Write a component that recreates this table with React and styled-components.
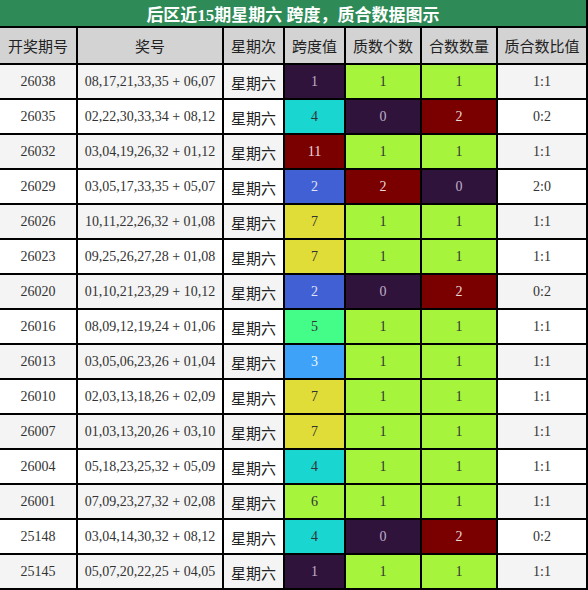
import React from "react";
import styled, { createGlobalStyle } from "styled-components";

const Global = createGlobalStyle`
  html, body { margin: 0; padding: 0; background: #fff; }
  body { font-family: "Liberation Serif", "Noto Sans CJK SC", serif; }
`;

const Grid = styled.div`
  display: grid;
  grid-template-columns: 76px 144px 59px 59px 74px 74px 88px;
  grid-template-rows: 26px 35px;
  grid-auto-rows: 33px;
  gap: 2px;
  padding: 0 2px 2px 0;
  background: #000;
  width: 588px;
  box-sizing: border-box;
`;

const Title = styled.div`
  grid-column: 1 / -1;
  background: #2e8b57;
  color: #fff;
  font-weight: bold;
  font-size: 17px;
  display: flex;
  align-items: center;
  justify-content: center;
`;

const Head = styled.div`
  background: #d3d3d3;
  color: #222;
  font-family: "Noto Sans CJK SC", sans-serif;
  font-size: 15px;
  display: flex;
  align-items: center;
  justify-content: center;
`;

const Cell = styled.div`
  background: ${(p) => p.$bg};
  color: ${(p) => p.$fg || "#333"};
  font-size: 14px;
  display: flex;
  align-items: center;
  justify-content: center;
  white-space: nowrap;
`;

const DayCell = styled(Cell)`
  font-family: "Noto Sans CJK SC", sans-serif;
  font-size: 15px;
  color: #222;
  padding-top: 1px;
`;

const C = {
  purple: ["#2f133b", "#c0b0cc"],
  lime: ["#a6f53c", "#333"],
  red: ["#7a0000", "#e8d8d8"],
  cyan: ["#1ad6d0", "#333"],
  blue: ["#4060d4", "#e0e4f8"],
  yellow: ["#e0dc38", "#333"],
  green: ["#44fc88", "#333"],
  lblue: ["#3da2f8", "#eef6ff"],
};

const rows = [
  ["26038", "08,17,21,33,35 + 06,07", "1", "purple", "1", "lime", "1", "lime", "1:1"],
  ["26035", "02,22,30,33,34 + 08,12", "4", "cyan", "0", "purple", "2", "red", "0:2"],
  ["26032", "03,04,19,26,32 + 01,12", "11", "red", "1", "lime", "1", "lime", "1:1"],
  ["26029", "03,05,17,33,35 + 05,07", "2", "blue", "2", "red", "0", "purple", "2:0"],
  ["26026", "10,11,22,26,32 + 01,08", "7", "yellow", "1", "lime", "1", "lime", "1:1"],
  ["26023", "09,25,26,27,28 + 01,08", "7", "yellow", "1", "lime", "1", "lime", "1:1"],
  ["26020", "01,10,21,23,29 + 10,12", "2", "blue", "0", "purple", "2", "red", "0:2"],
  ["26016", "08,09,12,19,24 + 01,06", "5", "green", "1", "lime", "1", "lime", "1:1"],
  ["26013", "03,05,06,23,26 + 01,04", "3", "lblue", "1", "lime", "1", "lime", "1:1"],
  ["26010", "02,03,13,18,26 + 02,09", "7", "yellow", "1", "lime", "1", "lime", "1:1"],
  ["26007", "01,03,13,20,26 + 03,10", "7", "yellow", "1", "lime", "1", "lime", "1:1"],
  ["26004", "05,18,23,25,32 + 05,09", "4", "cyan", "1", "lime", "1", "lime", "1:1"],
  ["26001", "07,09,23,27,32 + 02,08", "6", "lime", "1", "lime", "1", "lime", "1:1"],
  ["25148", "03,04,14,30,32 + 08,12", "4", "cyan", "0", "purple", "2", "red", "0:2"],
  ["25145", "05,07,20,22,25 + 04,05", "1", "purple", "1", "lime", "1", "lime", "1:1"],
];

const heads = ["开奖期号", "奖号", "星期次", "跨度值", "质数个数", "合数数量", "质合数比值"];

export default function App() {
  return (
    <>
      <Global />
      <Grid>
        <Title>后区近15期星期六 跨度，质合数据图示</Title>
        {heads.map((h) => (
          <Head key={h}>{h}</Head>
        ))}
        {rows.map((r, i) => {
          const bg = i % 2 === 0 ? "#f4f4f4" : "#ffffff";
          return (
            <React.Fragment key={r[0]}>
              <Cell $bg={bg}>{r[0]}</Cell>
              <Cell $bg={bg}>{r[1]}</Cell>
              <DayCell $bg={bg}>星期六</DayCell>
              <Cell $bg={C[r[3]][0]} $fg={C[r[3]][1]}>{r[2]}</Cell>
              <Cell $bg={C[r[5]][0]} $fg={C[r[5]][1]}>{r[4]}</Cell>
              <Cell $bg={C[r[7]][0]} $fg={C[r[7]][1]}>{r[6]}</Cell>
              <Cell $bg={bg}>{r[8]}</Cell>
            </React.Fragment>
          );
        })}
      </Grid>
    </>
  );
}
